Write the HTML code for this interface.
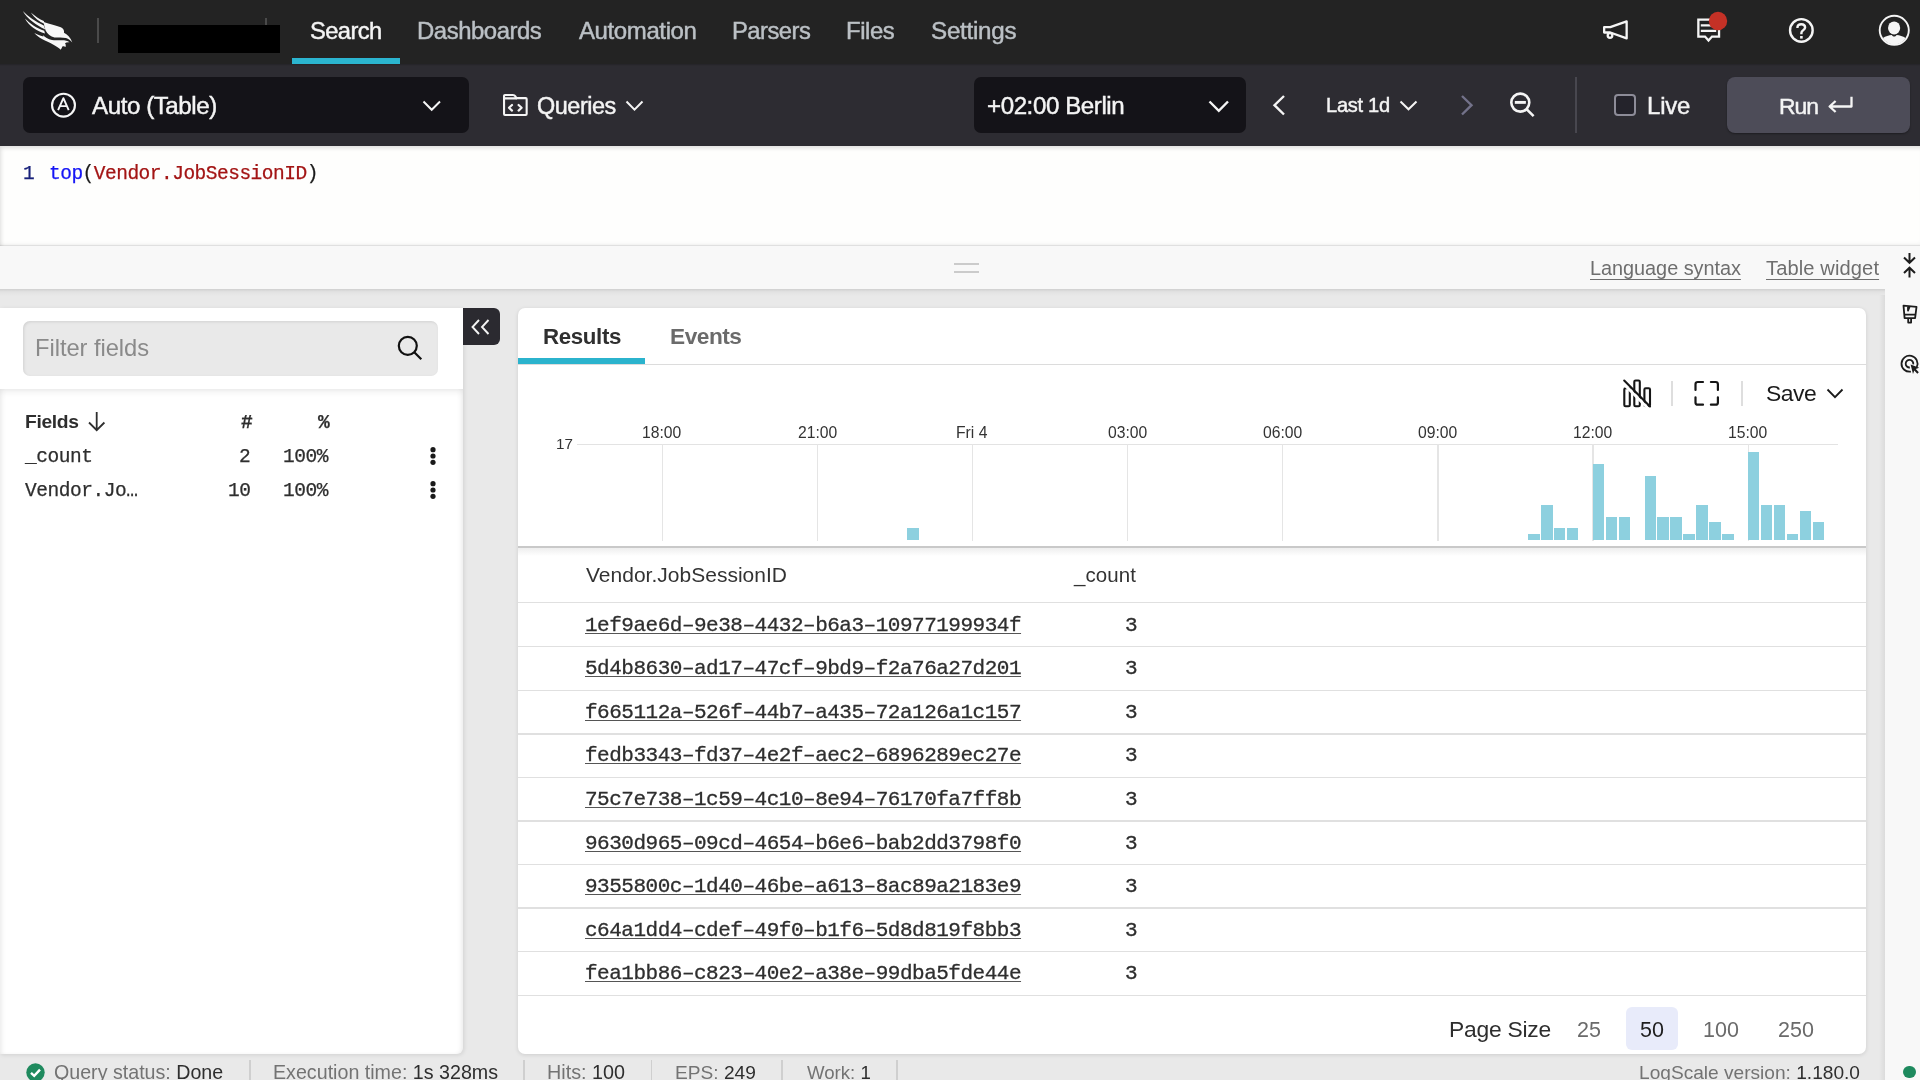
<!DOCTYPE html>
<html><head><meta charset="utf-8"><title>LogScale Search</title>
<style>
html,body{margin:0;padding:0;}
body{width:1920px;height:1080px;overflow:hidden;position:relative;background:#e8e8e8;font-family:"Liberation Sans",sans-serif;}
.b{position:absolute;display:block;}
.t{position:absolute;white-space:pre;will-change:transform;}
</style></head><body>
<div class="b" style="left:0px;top:0px;width:1920px;height:64px;background:#232323;"></div>
<svg class="b" style="left:15px;top:5px;overflow:visible" width="100" height="55" viewBox="15 5 100 55"><g fill="#f7f7f7">
<path d="M22.8,11 C28,16.5 35,21.5 43.8,25.5 L45.2,29.4 C36,25 27.5,19 22.8,11 Z"/>
<path d="M30.8,12.4 C35,16.1 39.5,19.0 43.8,20.9 L44.7,24.1 C39.2,21.5 34.4,17.9 30.8,12.4 Z"/>
<path d="M24.9,18.5 C30,23.5 37,28.5 44.2,30.8 L45,33.5 C37,31 29,26 24.9,18.5 Z"/>
<path d="M43.6,21.9 C50,24 56,25.3 60.8,27.3 C63.3,28.4 64.4,30.4 64,32.8 C67.2,34.3 70.5,37.5 72.3,42.5 C70.5,40.4 68.5,38.6 66,38 C62,37.8 58,38 54.5,37.6 C50.5,36.6 47.5,34 45.6,30.5 C44.6,27.8 44,24.8 43.6,21.9 Z"/>
<path d="M34.3,33.1 C38,35 41,36 43.5,36.5 L42.8,35 C45,37 47.5,38.6 50,39.4 C54,40.6 58,40.3 62,40.3 C65,40.3 67.5,40.8 69.5,42.3 C67.5,42 66,42.4 65,43.2 C65.8,44.2 66,45.5 65.5,47 C64.5,46.3 63.3,46.1 62.4,46.6 C62,47.6 61.5,48.8 60.8,49.8 C58.5,47.6 56,46 53,44.4 C49.5,42.5 46,41 42,39 C39,37.5 36.5,35.5 34.3,33.1 Z"/>
</g></svg>
<div class="b" style="left:97px;top:18px;width:2px;height:25px;background:#4a4a4a;"></div>
<div class="b" style="left:265px;top:18px;width:2px;height:8px;background:#4a4a4a;"></div>
<div class="b" style="left:118px;top:25px;width:162px;height:28px;background:#000;"></div>
<div class="b" style="left:292px;top:58px;width:108px;height:6px;background:#2bb5d0;"></div>
<div class="t " style="left:310.18px;top:20.00px;font-size:23.72px;line-height:23.72px;letter-spacing:-0.606px;font-family:'Liberation Sans', sans-serif;font-weight:400;color:#f4f4f4;-webkit-text-stroke:0.45px currentColor;">Search</div>
<div class="t " style="left:417.29px;top:19.00px;font-size:23.92px;line-height:23.92px;letter-spacing:-0.462px;font-family:'Liberation Sans', sans-serif;font-weight:400;color:#bbc0c5;-webkit-text-stroke:0.45px currentColor;">Dashboards</div>
<div class="t " style="left:579.20px;top:19.00px;font-size:24.00px;line-height:24.00px;letter-spacing:-0.393px;font-family:'Liberation Sans', sans-serif;font-weight:400;color:#bbc0c5;-webkit-text-stroke:0.45px currentColor;">Automation</div>
<div class="t " style="left:732.05px;top:19.00px;font-size:23.78px;line-height:23.78px;letter-spacing:-0.517px;font-family:'Liberation Sans', sans-serif;font-weight:400;color:#bbc0c5;-webkit-text-stroke:0.45px currentColor;">Parsers</div>
<div class="t " style="left:846.34px;top:19.00px;font-size:23.90px;line-height:23.90px;letter-spacing:-0.406px;font-family:'Liberation Sans', sans-serif;font-weight:400;color:#bbc0c5;-webkit-text-stroke:0.45px currentColor;">Files</div>
<div class="t " style="left:931.21px;top:19.00px;font-size:24.20px;line-height:24.20px;letter-spacing:-0.255px;font-family:'Liberation Sans', sans-serif;font-weight:400;color:#bbc0c5;-webkit-text-stroke:0.45px currentColor;">Settings</div>
<svg class="b" style="left:1600px;top:16px;overflow:visible;" width="32" height="28" viewBox="0 0 32 28"><g fill="none" stroke="#f5f5f5" stroke-width="2.3" stroke-linejoin="round">
<path d="M10.3,11.2 L26.65,5.35 L26.65,22.45 L10.3,16.5 L4.15,16.5 L4.15,11.2 Z"/>
<circle cx="10" cy="19.5" r="2.3"/></g></svg>
<svg class="b" style="left:1692px;top:14px;overflow:visible;" width="34" height="32" viewBox="0 0 34 32"><g fill="none" stroke="#f5f5f5" stroke-width="2.3">
<path d="M6.35,5.55 H27.05 V22.55 H20 L16.5,26.5 L13,22.55 H6.35 Z"/>
<path d="M8.8,11.3 H24.2 M8.8,16.8 H24.2"/></g>
<circle cx="26" cy="7" r="9.2" fill="#c43126"/></svg>
<svg class="b" style="left:1784px;top:14px;overflow:visible;" width="34" height="34" viewBox="0 0 34 34"><g fill="none" stroke="#f5f5f5" stroke-width="2.4">
<circle cx="17.35" cy="16.45" r="11.3"/>
<path d="M13.4,13.9 C13.4,11.5 15.2,10.3 17.3,10.3 C19.5,10.3 21.1,11.7 21.1,13.6 C21.1,15.9 17.4,16.4 17.4,18.9 L17.4,20.2"/></g>
<rect x="16.1" y="22" width="2.6" height="2.6" fill="#f5f5f5"/></svg>
<svg class="b" style="left:1876px;top:12px;overflow:visible;" width="36" height="36" viewBox="0 0 36 36"><circle cx="18.25" cy="18.35" r="14.55" fill="none" stroke="#f5f5f5" stroke-width="1.9"/>
<ellipse cx="18.1" cy="15.95" rx="6.1" ry="6.5" fill="#f5f5f5"/>
<path d="M6.9,26 C9.5,24.2 13,23.2 15.8,23 C16.5,24.2 17.4,24.6 18.2,24.6 C19,24.6 19.9,24.2 20.6,23 C23.4,23.2 27,24.2 29.6,26 C27,30 23,32.4 18.25,32.4 C13.5,32.4 9.5,30 6.9,26 Z" fill="#f5f5f5"/></svg>
<div class="b" style="left:0px;top:64px;width:1920px;height:82px;background:#2d2c32;"></div>
<div class="b" style="left:0px;top:64px;width:1920px;height:2px;background:linear-gradient(rgba(0,0,0,.22),rgba(0,0,0,0));"></div>
<div class="b" style="left:23px;top:77px;width:446px;height:56px;background:#141318;border-radius:7px;"></div>
<svg class="b" style="left:48px;top:90px;overflow:visible;" width="30" height="30" viewBox="0 0 30 30"><circle cx="15.5" cy="15.2" r="11.45" fill="none" stroke="#f5f5f5" stroke-width="2.1"/>
<path d="M10.1,20.1 L15.4,8.2 L20.7,20.1 M12.1,16.1 H18.7" fill="none" stroke="#f5f5f5" stroke-width="1.9" stroke-linejoin="round"/></svg>
<div class="t " style="left:91.70px;top:94.00px;font-size:24.15px;line-height:24.15px;letter-spacing:-0.447px;font-family:'Liberation Sans', sans-serif;font-weight:400;color:#f4f4f4;-webkit-text-stroke:0.45px currentColor;">Auto (Table)</div>
<svg class="b" style="left:420px;top:98px;overflow:visible;" width="24" height="16" viewBox="0 0 24 16"><path d="M3.5,3.5 L11.7,11.8 L20,3.5" fill="none" stroke="#f5f5f5" stroke-width="2"/></svg>
<svg class="b" style="left:500px;top:91px;overflow:visible;" width="32" height="28" viewBox="0 0 32 28"><g fill="none" stroke="#f5f5f5" stroke-width="2.1" stroke-linejoin="round" stroke-linecap="round">
<path d="M4.05,7.15 V23 Q4.05,23.95 5,23.95 H25.7 Q26.65,23.95 26.65,23 V8.1 Q26.65,7.15 25.7,7.15 H16.2"/>
<path d="M4.05,7.6 V5 Q4.05,4.05 5,4.05 H12.8 Q14.6,4.05 15.6,5.6 L16.3,7.4 H4.05"/>
<path d="M12,14 L9,16.8 L12,19.6 M18.6,14 L21.6,16.8 L18.6,19.6" stroke-width="2.2"/></g></svg>
<div class="t " style="left:536.60px;top:95.00px;font-size:23.44px;line-height:23.44px;letter-spacing:-0.472px;font-family:'Liberation Sans', sans-serif;font-weight:400;color:#f4f4f4;-webkit-text-stroke:0.45px currentColor;">Queries</div>
<svg class="b" style="left:623px;top:98px;overflow:visible;" width="24" height="16" viewBox="0 0 24 16"><path d="M3.5,3.5 L11.5,11.6 L19.5,3.5" fill="none" stroke="#f5f5f5" stroke-width="2"/></svg>
<div class="b" style="left:974px;top:77px;width:272px;height:56px;background:#141318;border-radius:7px;"></div>
<div class="t " style="left:987.12px;top:94.00px;font-size:24.12px;line-height:24.12px;letter-spacing:-0.424px;font-family:'Liberation Sans', sans-serif;font-weight:400;color:#f4f4f4;-webkit-text-stroke:0.45px currentColor;">+02:00 Berlin</div>
<svg class="b" style="left:1206px;top:98px;overflow:visible;" width="26" height="16" viewBox="0 0 26 16"><path d="M3.5,3.5 L12.8,12.8 L22,3.5" fill="none" stroke="#f5f5f5" stroke-width="2.4"/></svg>
<svg class="b" style="left:1270px;top:93px;overflow:visible;" width="20" height="24" viewBox="0 0 20 24"><path d="M14,3 L4.5,12.2 L14,21.5" fill="none" stroke="#f5f5f5" stroke-width="2.4"/></svg>
<div class="t " style="left:1325.85px;top:95.00px;font-size:20.08px;line-height:20.08px;letter-spacing:-0.290px;font-family:'Liberation Sans', sans-serif;font-weight:400;color:#f4f4f4;-webkit-text-stroke:0.45px currentColor;">Last 1d</div>
<svg class="b" style="left:1397px;top:98px;overflow:visible;" width="22" height="16" viewBox="0 0 22 16"><path d="M3.5,3.5 L11.5,11.3 L19.5,3.5" fill="none" stroke="#f5f5f5" stroke-width="2"/></svg>
<svg class="b" style="left:1457px;top:93px;overflow:visible;" width="20" height="24" viewBox="0 0 20 24"><path d="M5,3 L14.5,12.2 L5,21.5" fill="none" stroke="#73728a" stroke-width="2.4"/></svg>
<svg class="b" style="left:1506px;top:88px;overflow:visible;" width="34" height="34" viewBox="0 0 34 34"><g fill="none" stroke="#f5f5f5" stroke-width="2.6">
<circle cx="14.3" cy="14.6" r="9.0"/><path d="M20.8,21.3 L27.6,28.1"/><path d="M8.8,14.4 H19.9" stroke-width="2.9"/></g></svg>
<div class="b" style="left:1575px;top:77px;width:2px;height:56px;background:#48474f;"></div>
<div class="b" style="left:1614px;top:94px;width:21.5px;height:21.5px;background:#24232b;border:2px solid #8d8c98;border-radius:4px;box-sizing:border-box;"></div>
<div class="t " style="left:1646.84px;top:94.00px;font-size:23.96px;line-height:23.96px;letter-spacing:-0.176px;font-family:'Liberation Sans', sans-serif;font-weight:400;color:#f4f4f4;-webkit-text-stroke:0.45px currentColor;">Live</div>
<div class="b" style="left:1727px;top:77px;width:182.5px;height:56px;background:#4d4c58;border-radius:8px;box-shadow:0 1px 2px rgba(0,0,0,.35);"></div>
<div class="t " style="left:1779.42px;top:95.00px;font-size:22.94px;line-height:22.94px;letter-spacing:-1.000px;font-family:'Liberation Sans', sans-serif;font-weight:400;color:#f4f4f4;-webkit-text-stroke:0.45px currentColor;">Run</div>
<svg class="b" style="left:1825px;top:92px;overflow:visible;" width="32" height="26" viewBox="0 0 32 26"><g fill="none" stroke="#f5f5f5" stroke-width="2.3" stroke-linejoin="round">
<path d="M26.5,4.8 L26.5,14.5 L5,14.5 M10.6,9.0 L4.6,14.5 L10.6,20.0"/></g></svg>
<div class="b" style="left:0px;top:146px;width:1920px;height:100px;background:#fefefd;box-shadow:inset 3px 4px 4px -2px rgba(0,0,0,.13), inset 0 -4px 5px -3px rgba(0,0,0,.07);"></div>
<div class="t" style="left:22.95px;top:165.00px;font-size:19.500px;line-height:19.500px;font-family:'Liberation Mono', monospace;color:#18217a;-webkit-text-stroke:0.25px currentColor">1</div>
<div class="t" style="left:48.69px;top:165.00px;font-size:19.500px;line-height:19.500px;letter-spacing:-0.502px;font-family:'Liberation Mono', monospace;color:#1a1a1a;-webkit-text-stroke:0.25px currentColor"><span style="color:#1515f5">top</span>(<span style="color:#a31515">Vendor.JobSessionID</span>)</div>
<div class="b" style="left:0px;top:246px;width:1920px;height:43px;background:#f8f8f8;box-shadow:0 -1px 1px rgba(0,0,0,.08);"></div>
<div class="b" style="left:954px;top:262.7px;width:25px;height:2.1px;background:#cbcbcb;"></div>
<div class="b" style="left:954px;top:271.2px;width:25px;height:2.1px;background:#cbcbcb;"></div>
<div class="t " style="left:1589.67px;top:259.00px;font-size:19.86px;line-height:19.86px;letter-spacing:-0.026px;font-family:'Liberation Sans', sans-serif;font-weight:400;color:#6e6e6e;text-decoration:underline;text-decoration-thickness:1.4px;text-underline-offset:3.6px;">Language syntax</div>
<div class="t " style="left:1765.56px;top:258.00px;font-size:20.13px;line-height:20.13px;letter-spacing:0.108px;font-family:'Liberation Sans', sans-serif;font-weight:400;color:#6e6e6e;text-decoration:underline;text-decoration-thickness:1.4px;text-underline-offset:3.6px;">Table widget</div>
<svg class="b" style="left:1900px;top:250px;overflow:visible;" width="20" height="32" viewBox="0 0 20 32"><g fill="none" stroke="#1c1c1c" stroke-width="2">
<path d="M9.5,3 V12.5 M4,7.5 L9.5,12.8 L15,7.5 M9.5,27.5 V18 M4,23 L9.5,17.7 L15,23"/></g></svg>
<div class="b" style="left:0px;top:289px;width:1885px;height:791px;background:#e9e9e9;"></div>
<div class="b" style="left:0px;top:289px;width:1885px;height:7px;background:linear-gradient(rgba(0,0,0,.11),rgba(0,0,0,.03) 40%,rgba(0,0,0,0));"></div>
<div class="b" style="left:1885px;top:289px;width:35px;height:791px;background:#f8f8f8;"></div>
<div class="b" style="left:1879px;top:295px;width:6px;height:785px;background:linear-gradient(90deg,rgba(0,0,0,0),rgba(0,0,0,.06));"></div>
<svg class="b" style="left:1898px;top:302px;overflow:visible;" width="22" height="24" viewBox="0 0 22 24"><g fill="none" stroke="#1c1c1c" stroke-width="1.8" stroke-linejoin="round">
<path d="M5.5,3.6 L18.5,4.9 L17.1,16.2 L6.6,16.2 Z M6.2,12.7 H17.5 M10,3.9 V8.6 L11.7,4.3 M10.2,16.2 V20.6 H13.1 V16.2"/></g></svg>
<svg class="b" style="left:1898px;top:350px;overflow:visible;" width="22" height="26" viewBox="0 0 22 26"><g fill="none" stroke="#1c1c1c" stroke-width="1.8">
<path d="M18.75,17.08 A8,8 0 1 0 12.9,21.58"/><path d="M15.24,14.36 A3.8,3.8 0 1 0 11.83,17.49"/></g>
<path d="M12.6,14.4 L21.2,17.8 L17.8,19.1 L20.8,22.3 L19.3,23.7 L16.3,20.5 L15,23.9 Z" fill="#1c1c1c"/></svg>
<div class="b" style="left:0px;top:308px;width:463px;height:745.5px;background:#ffffff;border-radius:0 0 6px 0;box-shadow:1px 1px 4px rgba(0,0,0,.10);"></div>
<div class="b" style="left:23px;top:320.5px;width:415px;height:55.5px;background:#e9e9e9;border-radius:7px;box-shadow:inset 1px 1px 3px rgba(0,0,0,.10);"></div>
<div class="t " style="left:34.66px;top:337.00px;font-size:23.72px;line-height:23.72px;letter-spacing:-0.048px;font-family:'Liberation Sans', sans-serif;font-weight:400;color:#8a8a8a;">Filter fields</div>
<svg class="b" style="left:394px;top:332px;overflow:visible;" width="32" height="32" viewBox="0 0 32 32"><g fill="none" stroke="#111" stroke-width="2.2">
<circle cx="13.8" cy="13.8" r="9"/><path d="M20.3,20.3 L27.3,27.3"/></g></svg>
<div class="b" style="left:0px;top:389px;width:463px;height:664.5px;background:transparent;border-radius:0 0 6px 0;box-shadow:inset 0 4px 6px -1px rgba(0,0,0,.07), inset 4px 0 5px -2px rgba(0,0,0,.05), inset -4px 0 5px -2px rgba(0,0,0,.05);"></div>
<div class="t " style="left:24.51px;top:412.00px;font-size:19.28px;line-height:19.28px;letter-spacing:-0.350px;font-family:'Liberation Sans', sans-serif;font-weight:700;color:#2e2e2e;">Fields</div>
<svg class="b" style="left:86px;top:410px;overflow:visible;" width="22" height="24" viewBox="0 0 22 24"><g fill="none" stroke="#2e2e2e" stroke-width="1.8">
<path d="M10.7,2 V20 M3,12.5 L10.7,20.2 L18.4,12.5"/></g></svg>
<div class="t" style="left:241.13px;top:414.00px;font-size:19.50px;line-height:19.50px;letter-spacing:-0.45px;font-family:'Liberation Mono', monospace;font-weight:700;color:#2e2e2e;-webkit-text-stroke:0.25px currentColor;">#</div>
<div class="t" style="left:317.98px;top:414.00px;font-size:19.50px;line-height:19.50px;letter-spacing:-0.45px;font-family:'Liberation Mono', monospace;font-weight:700;color:#2e2e2e;-webkit-text-stroke:0.25px currentColor;">%</div>
<div class="t" style="left:25.06px;top:448.00px;font-size:19.50px;line-height:19.50px;letter-spacing:-0.45px;font-family:'Liberation Mono', monospace;font-weight:400;color:#2e2e2e;-webkit-text-stroke:0.25px currentColor;">_count</div>
<div class="t" style="left:239.16px;top:448.00px;font-size:19.50px;line-height:19.50px;letter-spacing:-0.45px;font-family:'Liberation Mono', monospace;font-weight:400;color:#2e2e2e;-webkit-text-stroke:0.25px currentColor;">2</div>
<div class="t" style="left:282.53px;top:448.00px;font-size:19.50px;line-height:19.50px;letter-spacing:-0.45px;font-family:'Liberation Mono', monospace;font-weight:400;color:#2e2e2e;-webkit-text-stroke:0.25px currentColor;">100%</div>
<div class="t" style="left:25.20px;top:482.00px;font-size:19.50px;line-height:19.50px;letter-spacing:-0.45px;font-family:'Liberation Mono', monospace;font-weight:400;color:#2e2e2e;-webkit-text-stroke:0.25px currentColor;">Vendor.Jo…</div>
<div class="t" style="left:227.74px;top:482.00px;font-size:19.50px;line-height:19.50px;letter-spacing:-0.45px;font-family:'Liberation Mono', monospace;font-weight:400;color:#2e2e2e;-webkit-text-stroke:0.25px currentColor;">10</div>
<div class="t" style="left:282.53px;top:482.00px;font-size:19.50px;line-height:19.50px;letter-spacing:-0.45px;font-family:'Liberation Mono', monospace;font-weight:400;color:#2e2e2e;-webkit-text-stroke:0.25px currentColor;">100%</div>
<svg class="b" style="left:428px;top:444px;overflow:visible;" width="10" height="24" viewBox="0 0 10 24"><circle cx="5" cy="5.7" r="2.6" fill="#1a1a1a"/><circle cx="5" cy="12" r="2.6" fill="#1a1a1a"/><circle cx="5" cy="18.3" r="2.6" fill="#1a1a1a"/></svg>
<svg class="b" style="left:428px;top:478.2px;overflow:visible;" width="10" height="24" viewBox="0 0 10 24"><circle cx="5" cy="5.7" r="2.6" fill="#1a1a1a"/><circle cx="5" cy="12" r="2.6" fill="#1a1a1a"/><circle cx="5" cy="18.3" r="2.6" fill="#1a1a1a"/></svg>
<div class="b" style="left:463px;top:308px;width:37px;height:37px;background:#2b2a30;border-radius:0 6px 6px 0;"></div>
<svg class="b" style="left:468px;top:315px;overflow:visible;" width="26" height="24" viewBox="0 0 26 24"><g fill="none" stroke="#f4f4f4" stroke-width="1.9">
<path d="M11,5 L4.5,12 L11,19 M20.5,5 L14,12 L20.5,19"/></g></svg>
<div class="b" style="left:518px;top:308px;width:1348px;height:745.5px;background:#ffffff;border-radius:7px;box-shadow:0 1px 4px rgba(0,0,0,.12);"></div>
<div class="t " style="left:542.51px;top:326.00px;font-size:22.29px;line-height:22.29px;letter-spacing:-0.351px;font-family:'Liberation Sans', sans-serif;font-weight:700;color:#2f2f2f;">Results</div>
<div class="t " style="left:669.73px;top:325.00px;font-size:22.67px;line-height:22.67px;letter-spacing:-0.466px;font-family:'Liberation Sans', sans-serif;font-weight:700;color:#6b6b6b;">Events</div>
<div class="b" style="left:518px;top:364px;width:1348px;height:1.3px;background:#dcdcdc;"></div>
<div class="b" style="left:518px;top:357.8px;width:127px;height:6.2px;background:#2bb3cd;"></div>
<svg class="b" style="left:1620px;top:376px;overflow:visible;" width="34" height="34" viewBox="0 0 34 34"><g fill="none" stroke="#161616" stroke-width="2.1">
<rect x="4.3" y="12.2" width="5.5" height="18" rx="1.3"/>
<rect x="14.3" y="4.5" width="5.5" height="25.7" rx="1.3"/>
<rect x="24.4" y="12.2" width="5.6" height="18" rx="1.3"/></g>
<path d="M2.2,6.6 L28.2,32.6" stroke="#fff" stroke-width="2.8"/>
<path d="M4.2,4.6 L30,30.4" stroke="#161616" stroke-width="2.1" stroke-linecap="round"/></svg>
<div class="b" style="left:1671px;top:381px;width:1.5px;height:25px;background:#dedede;"></div>
<svg class="b" style="left:1690px;top:377px;overflow:visible;" width="32" height="32" viewBox="0 0 32 32"><g fill="none" stroke="#161616" stroke-width="2.2" stroke-linecap="round">
<path d="M5.5,12.9 V7.3 Q5.5,5 7.8,5 H13.0 M20.9,5 H25.6 Q27.9,5 27.9,7.3 V12.9 M27.9,20.3 V25.4 Q27.9,27.7 25.6,27.7 H20.9 M13.0,27.7 H7.8 Q5.5,27.7 5.5,25.4 V20.3"/></g></svg>
<div class="b" style="left:1741px;top:381px;width:1.5px;height:25px;background:#dedede;"></div>
<div class="t " style="left:1766.47px;top:382.00px;font-size:22.91px;line-height:22.91px;letter-spacing:-0.521px;font-family:'Liberation Sans', sans-serif;font-weight:400;color:#1a1a1a;">Save</div>
<svg class="b" style="left:1824px;top:386px;overflow:visible;" width="22" height="16" viewBox="0 0 22 16"><path d="M3.5,3.5 L11,11.2 L18.5,3.5" fill="none" stroke="#1a1a1a" stroke-width="1.8"/></svg>
<div class="b" style="left:577px;top:444px;width:1261px;height:1.3px;background:#e3e3e3;"></div>
<div class="t " style="left:556.34px;top:436.00px;font-size:15.21px;line-height:15.21px;letter-spacing:0.000px;font-family:'Liberation Sans', sans-serif;font-weight:400;color:#333;">17</div>
<div class="b" style="left:661.5px;top:444px;width:1.3px;height:97px;background:#e5e5e5;"></div>
<div class="t " style="left:642.17px;top:425.00px;font-size:15.70px;line-height:15.70px;letter-spacing:-0.000px;font-family:'Liberation Sans', sans-serif;font-weight:400;color:#333;">18:00</div>
<div class="b" style="left:816.65px;top:444px;width:1.3px;height:97px;background:#e5e5e5;"></div>
<div class="t " style="left:797.52px;top:425.00px;font-size:15.70px;line-height:15.70px;letter-spacing:-0.000px;font-family:'Liberation Sans', sans-serif;font-weight:400;color:#333;">21:00</div>
<div class="b" style="left:971.8px;top:444px;width:1.3px;height:97px;background:#e5e5e5;"></div>
<div class="t " style="left:956.28px;top:425.00px;font-size:15.70px;line-height:15.70px;letter-spacing:0.000px;font-family:'Liberation Sans', sans-serif;font-weight:400;color:#333;">Fri 4</div>
<div class="b" style="left:1126.95px;top:444px;width:1.3px;height:97px;background:#e5e5e5;"></div>
<div class="t " style="left:1107.91px;top:425.00px;font-size:15.70px;line-height:15.70px;letter-spacing:-0.000px;font-family:'Liberation Sans', sans-serif;font-weight:400;color:#333;">03:00</div>
<div class="b" style="left:1282.1px;top:444px;width:1.3px;height:97px;background:#e5e5e5;"></div>
<div class="t " style="left:1263.06px;top:425.00px;font-size:15.70px;line-height:15.70px;letter-spacing:-0.000px;font-family:'Liberation Sans', sans-serif;font-weight:400;color:#333;">06:00</div>
<div class="b" style="left:1437.25px;top:444px;width:1.3px;height:97px;background:#e5e5e5;"></div>
<div class="t " style="left:1418.21px;top:425.00px;font-size:15.70px;line-height:15.70px;letter-spacing:-0.000px;font-family:'Liberation Sans', sans-serif;font-weight:400;color:#333;">09:00</div>
<div class="b" style="left:1592.4px;top:444px;width:1.3px;height:97px;background:#e5e5e5;"></div>
<div class="t " style="left:1573.07px;top:425.00px;font-size:15.70px;line-height:15.70px;letter-spacing:-0.000px;font-family:'Liberation Sans', sans-serif;font-weight:400;color:#333;">12:00</div>
<div class="b" style="left:1747.55px;top:444px;width:1.3px;height:97px;background:#e5e5e5;"></div>
<div class="t " style="left:1728.22px;top:425.00px;font-size:15.70px;line-height:15.70px;letter-spacing:-0.000px;font-family:'Liberation Sans', sans-serif;font-weight:400;color:#333;">15:00</div>
<div class="b" style="left:907.22px;top:528.28px;width:11.5px;height:11.72px;background:#8dd0df;"></div>
<div class="b" style="left:1528.1px;top:534.14px;width:11.5px;height:5.86px;background:#8dd0df;"></div>
<div class="b" style="left:1541.03px;top:504.84px;width:11.5px;height:35.16px;background:#8dd0df;"></div>
<div class="b" style="left:1553.97px;top:528.28px;width:11.5px;height:11.72px;background:#8dd0df;"></div>
<div class="b" style="left:1566.9px;top:528.28px;width:11.5px;height:11.72px;background:#8dd0df;"></div>
<div class="b" style="left:1592.77px;top:463.82px;width:11.5px;height:76.18px;background:#8dd0df;"></div>
<div class="b" style="left:1605.71px;top:516.56px;width:11.5px;height:23.44px;background:#8dd0df;"></div>
<div class="b" style="left:1618.64px;top:516.56px;width:11.5px;height:23.44px;background:#8dd0df;"></div>
<div class="b" style="left:1644.51px;top:475.54px;width:11.5px;height:64.46px;background:#8dd0df;"></div>
<div class="b" style="left:1657.45px;top:516.56px;width:11.5px;height:23.44px;background:#8dd0df;"></div>
<div class="b" style="left:1670.38px;top:516.56px;width:11.5px;height:23.44px;background:#8dd0df;"></div>
<div class="b" style="left:1683.32px;top:534.14px;width:11.5px;height:5.86px;background:#8dd0df;"></div>
<div class="b" style="left:1696.25px;top:504.84px;width:11.5px;height:35.16px;background:#8dd0df;"></div>
<div class="b" style="left:1709.19px;top:522.42px;width:11.5px;height:17.58px;background:#8dd0df;"></div>
<div class="b" style="left:1722.12px;top:534.14px;width:11.5px;height:5.86px;background:#8dd0df;"></div>
<div class="b" style="left:1747.99px;top:452.1px;width:11.5px;height:87.9px;background:#8dd0df;"></div>
<div class="b" style="left:1760.93px;top:504.84px;width:11.5px;height:35.16px;background:#8dd0df;"></div>
<div class="b" style="left:1773.87px;top:504.84px;width:11.5px;height:35.16px;background:#8dd0df;"></div>
<div class="b" style="left:1786.8px;top:534.14px;width:11.5px;height:5.86px;background:#8dd0df;"></div>
<div class="b" style="left:1799.73px;top:510.7px;width:11.5px;height:29.3px;background:#8dd0df;"></div>
<div class="b" style="left:1812.67px;top:522.42px;width:11.5px;height:17.58px;background:#8dd0df;"></div>
<div class="b" style="left:518px;top:545.8px;width:1348px;height:2.2px;background:#c9c9c9;"></div>
<div class="b" style="left:518px;top:548px;width:1348px;height:8px;background:linear-gradient(#eeeeee,#ffffff);"></div>
<div class="t " style="left:585.52px;top:564.00px;font-size:20.98px;line-height:20.98px;letter-spacing:0.026px;font-family:'Liberation Sans', sans-serif;font-weight:400;color:#333;">Vendor.JobSessionID</div>
<div class="t " style="left:1074.31px;top:565.00px;font-size:20.49px;line-height:20.49px;letter-spacing:0.083px;font-family:'Liberation Sans', sans-serif;font-weight:400;color:#333;">_count</div>
<div class="b" style="left:518px;top:602px;width:1348px;height:1.3px;background:#e0e0e0;"></div>
<div class="t" style="left:585px;top:615.00px;font-size:21.000px;line-height:21.000px;letter-spacing:-0.490px;font-family:'Liberation Mono', monospace;color:#2e2e2e;text-decoration:underline;text-decoration-thickness:1.4px;text-underline-offset:2.4px;text-decoration-color:#555;-webkit-text-stroke:0.3px currentColor">1ef9ae6d–9e38–4432–b6a3–10977199934f</div>
<div class="t" style="left:1124.52px;top:615.00px;font-size:21.00px;line-height:21.00px;letter-spacing:0.0px;font-family:'Liberation Mono', monospace;font-weight:400;color:#2e2e2e;-webkit-text-stroke:0.3px currentColor;">3</div>
<div class="b" style="left:518px;top:646.07px;width:1348px;height:1.3px;background:#e0e0e0;"></div>
<div class="t" style="left:585px;top:658.00px;font-size:21.000px;line-height:21.000px;letter-spacing:-0.490px;font-family:'Liberation Mono', monospace;color:#2e2e2e;text-decoration:underline;text-decoration-thickness:1.4px;text-underline-offset:2.4px;text-decoration-color:#555;-webkit-text-stroke:0.3px currentColor">5d4b8630–ad17–47cf–9bd9–f2a76a27d201</div>
<div class="t" style="left:1124.52px;top:658.00px;font-size:21.00px;line-height:21.00px;letter-spacing:0.0px;font-family:'Liberation Mono', monospace;font-weight:400;color:#2e2e2e;-webkit-text-stroke:0.3px currentColor;">3</div>
<div class="b" style="left:518px;top:689.64px;width:1348px;height:1.3px;background:#e0e0e0;"></div>
<div class="t" style="left:585px;top:702.00px;font-size:21.000px;line-height:21.000px;letter-spacing:-0.490px;font-family:'Liberation Mono', monospace;color:#2e2e2e;text-decoration:underline;text-decoration-thickness:1.4px;text-underline-offset:2.4px;text-decoration-color:#555;-webkit-text-stroke:0.3px currentColor">f665112a–526f–44b7–a435–72a126a1c157</div>
<div class="t" style="left:1124.52px;top:702.00px;font-size:21.00px;line-height:21.00px;letter-spacing:0.0px;font-family:'Liberation Mono', monospace;font-weight:400;color:#2e2e2e;-webkit-text-stroke:0.3px currentColor;">3</div>
<div class="b" style="left:518px;top:733.21px;width:1348px;height:1.3px;background:#e0e0e0;"></div>
<div class="t" style="left:585px;top:745.00px;font-size:21.000px;line-height:21.000px;letter-spacing:-0.490px;font-family:'Liberation Mono', monospace;color:#2e2e2e;text-decoration:underline;text-decoration-thickness:1.4px;text-underline-offset:2.4px;text-decoration-color:#555;-webkit-text-stroke:0.3px currentColor">fedb3343–fd37–4e2f–aec2–6896289ec27e</div>
<div class="t" style="left:1124.52px;top:745.00px;font-size:21.00px;line-height:21.00px;letter-spacing:0.0px;font-family:'Liberation Mono', monospace;font-weight:400;color:#2e2e2e;-webkit-text-stroke:0.3px currentColor;">3</div>
<div class="b" style="left:518px;top:776.78px;width:1348px;height:1.3px;background:#e0e0e0;"></div>
<div class="t" style="left:585px;top:789.00px;font-size:21.000px;line-height:21.000px;letter-spacing:-0.490px;font-family:'Liberation Mono', monospace;color:#2e2e2e;text-decoration:underline;text-decoration-thickness:1.4px;text-underline-offset:2.4px;text-decoration-color:#555;-webkit-text-stroke:0.3px currentColor">75c7e738–1c59–4c10–8e94–76170fa7ff8b</div>
<div class="t" style="left:1124.52px;top:789.00px;font-size:21.00px;line-height:21.00px;letter-spacing:0.0px;font-family:'Liberation Mono', monospace;font-weight:400;color:#2e2e2e;-webkit-text-stroke:0.3px currentColor;">3</div>
<div class="b" style="left:518px;top:820.35px;width:1348px;height:1.3px;background:#e0e0e0;"></div>
<div class="t" style="left:585px;top:833.00px;font-size:21.000px;line-height:21.000px;letter-spacing:-0.490px;font-family:'Liberation Mono', monospace;color:#2e2e2e;text-decoration:underline;text-decoration-thickness:1.4px;text-underline-offset:2.4px;text-decoration-color:#555;-webkit-text-stroke:0.3px currentColor">9630d965–09cd–4654–b6e6–bab2dd3798f0</div>
<div class="t" style="left:1124.52px;top:833.00px;font-size:21.00px;line-height:21.00px;letter-spacing:0.0px;font-family:'Liberation Mono', monospace;font-weight:400;color:#2e2e2e;-webkit-text-stroke:0.3px currentColor;">3</div>
<div class="b" style="left:518px;top:863.92px;width:1348px;height:1.3px;background:#e0e0e0;"></div>
<div class="t" style="left:585px;top:876.00px;font-size:21.000px;line-height:21.000px;letter-spacing:-0.490px;font-family:'Liberation Mono', monospace;color:#2e2e2e;text-decoration:underline;text-decoration-thickness:1.4px;text-underline-offset:2.4px;text-decoration-color:#555;-webkit-text-stroke:0.3px currentColor">9355800c–1d40–46be–a613–8ac89a2183e9</div>
<div class="t" style="left:1124.52px;top:876.00px;font-size:21.00px;line-height:21.00px;letter-spacing:0.0px;font-family:'Liberation Mono', monospace;font-weight:400;color:#2e2e2e;-webkit-text-stroke:0.3px currentColor;">3</div>
<div class="b" style="left:518px;top:907.49px;width:1348px;height:1.3px;background:#e0e0e0;"></div>
<div class="t" style="left:585px;top:920.00px;font-size:21.000px;line-height:21.000px;letter-spacing:-0.490px;font-family:'Liberation Mono', monospace;color:#2e2e2e;text-decoration:underline;text-decoration-thickness:1.4px;text-underline-offset:2.4px;text-decoration-color:#555;-webkit-text-stroke:0.3px currentColor">c64a1dd4–cdef–49f0–b1f6–5d8d819f8bb3</div>
<div class="t" style="left:1124.52px;top:920.00px;font-size:21.00px;line-height:21.00px;letter-spacing:0.0px;font-family:'Liberation Mono', monospace;font-weight:400;color:#2e2e2e;-webkit-text-stroke:0.3px currentColor;">3</div>
<div class="b" style="left:518px;top:951.06px;width:1348px;height:1.3px;background:#e0e0e0;"></div>
<div class="t" style="left:585px;top:963.00px;font-size:21.000px;line-height:21.000px;letter-spacing:-0.490px;font-family:'Liberation Mono', monospace;color:#2e2e2e;text-decoration:underline;text-decoration-thickness:1.4px;text-underline-offset:2.4px;text-decoration-color:#555;-webkit-text-stroke:0.3px currentColor">fea1bb86–c823–40e2–a38e–99dba5fde44e</div>
<div class="t" style="left:1124.52px;top:963.00px;font-size:21.00px;line-height:21.00px;letter-spacing:0.0px;font-family:'Liberation Mono', monospace;font-weight:400;color:#2e2e2e;-webkit-text-stroke:0.3px currentColor;">3</div>
<div class="b" style="left:518px;top:994.63px;width:1348px;height:1.3px;background:#e0e0e0;"></div>
<div class="t " style="left:1448.73px;top:1018.00px;font-size:22.84px;line-height:22.84px;letter-spacing:-0.229px;font-family:'Liberation Sans', sans-serif;font-weight:400;color:#2e2e2e;">Page Size</div>
<div class="t" style="left:1576.51px;top:1020.00px;font-size:21.50px;line-height:21.50px;letter-spacing:0.0px;font-family:'Liberation Sans', sans-serif;font-weight:400;color:#6a6a6a;">25</div>
<div class="b" style="left:1626.4px;top:1006.7px;width:51.6px;height:43.3px;background:#e8ebfa;border-radius:6px;"></div>
<div class="t" style="left:1639.89px;top:1020.00px;font-size:21.50px;line-height:21.50px;letter-spacing:0.0px;font-family:'Liberation Sans', sans-serif;font-weight:400;color:#1e1e1e;">50</div>
<div class="t" style="left:1702.62px;top:1020.00px;font-size:21.50px;line-height:21.50px;letter-spacing:0.0px;font-family:'Liberation Sans', sans-serif;font-weight:400;color:#6a6a6a;">100</div>
<div class="t" style="left:1778.45px;top:1020.00px;font-size:21.50px;line-height:21.50px;letter-spacing:0.0px;font-family:'Liberation Sans', sans-serif;font-weight:400;color:#6a6a6a;">250</div>
<svg class="b" style="left:24px;top:1061px;overflow:visible;" width="24" height="22" viewBox="0 0 24 22"><circle cx="11.5" cy="11.5" r="9.2" fill="#1f8a5e"/>
<path d="M7,11.8 L10.2,14.8 L16,8.6" fill="none" stroke="#fff" stroke-width="2.4"/></svg>
<div class="t" style="left:54.08px;top:1063.00px;font-size:19.65px;line-height:19.65px;font-family:'Liberation Sans', sans-serif;color:#737373">Query status: <span style="color:#2e2e2e">Done</span></div>
<div class="t" style="left:272.79px;top:1063.00px;font-size:19.66px;line-height:19.66px;font-family:'Liberation Sans', sans-serif;color:#737373">Execution time: <span style="color:#2e2e2e">1s 328ms</span></div>
<div class="t" style="left:547.18px;top:1063.00px;font-size:19.76px;line-height:19.76px;font-family:'Liberation Sans', sans-serif;color:#737373">Hits: <span style="color:#2e2e2e">100</span></div>
<div class="t" style="left:675.03px;top:1063.00px;font-size:19.14px;line-height:19.14px;font-family:'Liberation Sans', sans-serif;color:#737373">EPS: <span style="color:#2e2e2e">249</span></div>
<div class="t" style="left:807.23px;top:1064.00px;font-size:18.64px;line-height:18.64px;font-family:'Liberation Sans', sans-serif;color:#737373">Work: <span style="color:#2e2e2e">1</span></div>
<div class="t" style="left:1639.13px;top:1063.00px;font-size:19.11px;line-height:19.11px;font-family:'Liberation Sans', sans-serif;color:#737373">LogScale version: <span style="color:#2e2e2e">1.180.0</span></div>
<div class="b" style="left:249px;top:1060px;width:1.5px;height:20px;background:#cfcfcf;"></div>
<div class="b" style="left:523px;top:1060px;width:1.5px;height:20px;background:#cfcfcf;"></div>
<div class="b" style="left:650.5px;top:1060px;width:1.5px;height:20px;background:#cfcfcf;"></div>
<div class="b" style="left:781px;top:1060px;width:1.5px;height:20px;background:#cfcfcf;"></div>
<div class="b" style="left:896px;top:1060px;width:1.5px;height:20px;background:#cfcfcf;"></div>
<div class="b" style="left:1903.2px;top:1065.7px;width:12.4px;height:12.4px;background:#1e8a5e;border-radius:50%;"></div>
</body></html>
